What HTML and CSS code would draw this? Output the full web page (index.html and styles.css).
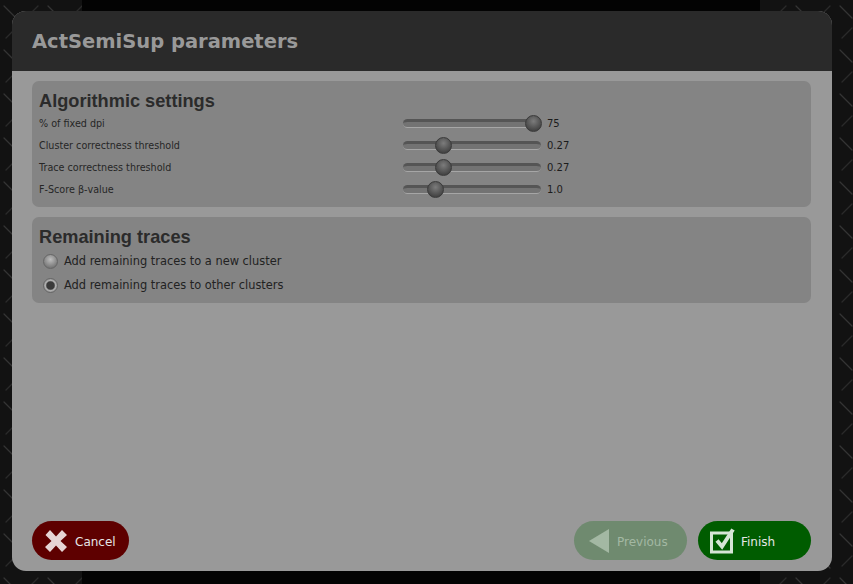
FILE: index.html
```html
<!DOCTYPE html>
<html lang="en">
<head>
    <meta charset="UTF-8">
    <meta name="viewport" content="width=device-width, initial-scale=1.0">
    <title>ActSemiSup parameters</title>
    <link rel="stylesheet" href="styles.css">
</head>
<body>
    <svg class="backdrop" width="853" height="584" aria-hidden="true">
        <defs>
            <pattern id="plate" width="44" height="44" patternUnits="userSpaceOnUse">
                <rect width="44" height="44" fill="#121212"/>
                <path d="M4 6 L16 18 M26 28 L38 40" stroke="#343434" stroke-width="1.200" stroke-linecap="round"/>
                <path d="M38 6 L28 16 M16 28 L6 38" stroke="#2a2a2a" stroke-width="1.200" stroke-linecap="round"/>
            </pattern>
        </defs>
        <rect width="853" height="584" fill="url(#plate)"/>
        <rect x="82" width="678" height="584" fill="#030303"/>
    </svg>

    <div class="dialog">
        <div class="dialog-header">ActSemiSup parameters</div>
        <div class="dialog-body">
            <div class="panel panel-settings">
                <h2>Algorithmic settings</h2>
                <div class="param-row">
                    <span class="param-label">% of fixed dpi</span>
                    <div class="slider"><span class="thumb thumb-max"></span></div>
                    <span class="param-value">75</span>
                </div>
                <div class="param-row">
                    <span class="param-label">Cluster correctness threshold</span>
                    <div class="slider"><span class="thumb thumb-cluster"></span></div>
                    <span class="param-value">0.27</span>
                </div>
                <div class="param-row">
                    <span class="param-label">Trace correctness threshold</span>
                    <div class="slider"><span class="thumb thumb-cluster"></span></div>
                    <span class="param-value">0.27</span>
                </div>
                <div class="param-row">
                    <span class="param-label">F-Score β-value</span>
                    <div class="slider"><span class="thumb thumb-fscore"></span></div>
                    <span class="param-value">1.0</span>
                </div>
            </div>

            <div class="panel panel-remaining">
                <h2>Remaining traces</h2>
                <div class="radio-row">
                    <span class="radio"></span>
                    <span>Add remaining traces to a new cluster</span>
                </div>
                <div class="radio-row">
                    <span class="radio radio-on"></span>
                    <span>Add remaining traces to other clusters</span>
                </div>
            </div>

            <div class="button-bar">
                <div class="btn btn-cancel">
                    <svg width="24" height="24" viewBox="0 0 24 24"><path d="M1.500 6 L6 1 L12 7.500 L18 1 L23 6 L16.500 12 L23 18 L18 23 L12 16.500 L6 23 L1 18 L7.500 12 Z" fill="#e6d5d5"/></svg>
                    <span>Cancel</span>
                </div>
                <div class="button-gap"></div>
                <div class="btn btn-previous">
                    <svg width="22" height="26" viewBox="0 0 22 26"><path d="M21 1 V25 L1 13 Z" fill="#a3b8a3"/></svg>
                    <span>Previous</span>
                </div>
                <div class="btn btn-finish">
                    <svg width="26" height="28" viewBox="0 0 26 28">
                        <rect x="1.500" y="6" width="20" height="19" fill="none" stroke="#d5e5d5" stroke-width="3"/>
                        <path d="M7 13.500 L12 19.500 L23 2.500" fill="none" stroke="#d5e5d5" stroke-width="4"/>
                    </svg>
                    <span>Finish</span>
                </div>
            </div>
        </div>
    </div>
</body>
</html>
```

FILE: styles.css
```css
html, body {
    height: 100%;
}
body {
    margin: 0;
    padding: 11px 21px 13px 12px;
    box-sizing: border-box;
    overflow: hidden;
    background-color: #030303;
    font-family: "DejaVu Sans", sans-serif;
}
.backdrop {
    position: absolute;
    left: 0;
    top: 0;
}
.dialog {
    position: relative;
    display: flex;
    flex-direction: column;
    height: 100%;
    border-radius: 14px;
    overflow: hidden;
    background-color: #999999;
}
.dialog-header {
    height: 60px;
    flex: none;
    box-sizing: border-box;
    padding: 16px 20px 0;
    background-color: #2a2a2a;
    color: #999999;
    font-size: 19.500px;
    font-weight: bold;
    line-height: 30px;
}
.dialog-body {
    flex: 1;
    display: flex;
    flex-direction: column;
    padding: 10px 21px 11px 20px;
}
.panel {
    background-color: #848484;
    border-radius: 7px;
    padding: 9px 7px 0;
    box-sizing: border-box;
}
.panel h2 {
    margin: 0;
    font-family: "Liberation Sans", Arial, sans-serif;
    font-size: 18.200px;
    line-height: 22px;
    color: #2b2b2b;
}
.panel-settings {
    height: 126px;
}
.panel-remaining {
    height: 86px;
    margin-top: 10px;
}
.param-row {
    display: flex;
    align-items: center;
    height: 22px;
    font-size: 9.600px;
    color: #262626;
}
.param-label {
    width: 364px;
    flex: none;
}
.slider {
    position: relative;
    width: 138px;
    height: 9px;
    flex: none;
    box-sizing: border-box;
    border-radius: 4.500px;
    border-top: 3px solid #555555;
    border-bottom: 1px solid #a6a6a6;
    background-color: #737373;
}
.thumb {
    position: absolute;
    top: -7px;
    width: 17px;
    height: 17px;
    border-radius: 50%;
    background: radial-gradient(circle at 50% 35%, #7c7c7c, #444444 75%);
    border: 1px solid #3a3a3a;
    box-sizing: border-box;
}
.thumb-max {
    left: 122px;
}
.thumb-cluster {
    left: 32px;
}
.thumb-fscore {
    left: 24px;
}
.param-value {
    margin-left: 6px;
    font-size: 10px;
    color: #1c1c1c;
}
.radio-row {
    position: relative;
    top: 1px;
    display: flex;
    align-items: center;
    height: 24px;
    padding-left: 4px;
    font-size: 11.400px;
    color: #222222;
}
.radio {
    width: 15px;
    height: 15px;
    flex: none;
    margin-right: 6px;
    border-radius: 50%;
    box-sizing: border-box;
    border: 1px solid #666666;
    background: radial-gradient(circle at 50% 35%, #bdbdbd, #6e6e6e 85%);
}
.radio-on {
    background: radial-gradient(circle, #3a3a3a 0, #3a3a3a 40%, #b0b0b0 55%, #6e6e6e 100%);
}
.button-bar {
    display: flex;
    margin-top: auto;
    gap: 11px;
}
.button-gap {
    flex: 1;
}
.btn {
    display: flex;
    align-items: center;
    height: 39px;
    border-radius: 20px;
    box-sizing: border-box;
    font-size: 12px;
    color: #e6e6e6;
}
.btn span {
    padding-top: 2px;
}
.btn-cancel {
    width: 97px;
    padding-left: 12px;
    gap: 7px;
    background-color: #5e0000;
}
.btn-previous {
    width: 113px;
    padding-left: 14px;
    gap: 7px;
    background-color: #6f8a6f;
    color: #a3b8a3;
}
.btn-finish {
    width: 113px;
    padding-left: 12px;
    gap: 5px;
    background-color: #005c00;
}
```
